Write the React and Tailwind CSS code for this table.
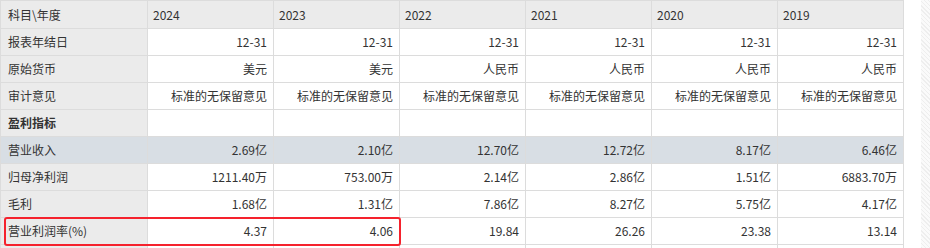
import React from 'react';

const years = ['2024', '2023', '2022', '2021', '2020', '2019'];

const rows = [
  { label: '报表年结日', values: ['12-31', '12-31', '12-31', '12-31', '12-31', '12-31'] },
  { label: '原始货币', values: ['美元', '美元', '人民币', '人民币', '人民币', '人民币'] },
  { label: '审计意见', values: Array(6).fill('标准的无保留意见') },
  { label: '盈利指标', values: Array(6).fill(''), section: true },
  { label: '营业收入', values: ['2.69亿', '2.10亿', '12.70亿', '12.72亿', '8.17亿', '6.46亿'], active: true },
  { label: '归母净利润', values: ['1211.40万', '753.00万', '2.14亿', '2.86亿', '1.51亿', '6883.70万'] },
  { label: '毛利', values: ['1.68亿', '1.31亿', '7.86亿', '8.27亿', '5.75亿', '4.17亿'] },
  { label: '营业利润率(%)', values: ['4.37', '4.06', '19.84', '26.26', '23.38', '13.14'] },
  { label: '', values: Array(6).fill('') },
];

const App = () => {
  return (
    <div
      className="relative w-[930px] h-[248px] overflow-hidden bg-white text-[12px] text-[#333]"
      style={{ fontFamily: '"Noto Sans CJK SC", "Noto Sans", sans-serif' }}
    >
      <div className="flex h-full">
        <div className="w-[904px] shrink-0">
          <div className="border-t border-l border-[#dcdcdc]">
            {/* header */}
            <div className="grid grid-cols-[147px_repeat(6,126px)] h-[28px] bg-[#ebebeb]">
              <div className="flex items-center pl-[7px] border-r border-b border-[#dcdcdc]">科目\年度</div>
              {years.map((y) => (
                <div key={y} className="flex items-center pl-[5px] border-r border-b border-[#dcdcdc]">
                  {y}
                </div>
              ))}
            </div>
            {rows.map((row, i) => (
              <div
                key={i}
                className={`grid grid-cols-[147px_repeat(6,126px)] h-[27px] ${row.active ? 'bg-[#d8dee4]' : ''}`}
              >
                <div
                  className={`flex items-center pl-[7px] border-r border-b border-[#dcdcdc] ${
                    row.active ? '' : 'bg-[#ebebeb]'
                  } ${row.section ? 'font-bold' : ''}`}
                >
                  {row.label}
                </div>
                {row.values.map((v, j) => (
                  <div
                    key={j}
                    className={`flex items-center justify-end pr-[6px] border-r border-b border-[#dcdcdc] ${
                      row.active ? '' : 'bg-white'
                    }`}
                  >
                    {v}
                  </div>
                ))}
              </div>
            ))}
          </div>
        </div>
        <div className="w-[17px] shrink-0" />
        <div className="w-[9px] shrink-0 bg-[repeating-linear-gradient(45deg,#eeeeee_0_1px,#fafafa_1px_3px)]" />
      </div>
      {/* highlight box */}
      <div className="absolute left-[4px] top-[217px] w-[397px] h-[29px] border-2 border-[#f5222d] rounded-[3px]" />
    </div>
  );
};

export default App;
